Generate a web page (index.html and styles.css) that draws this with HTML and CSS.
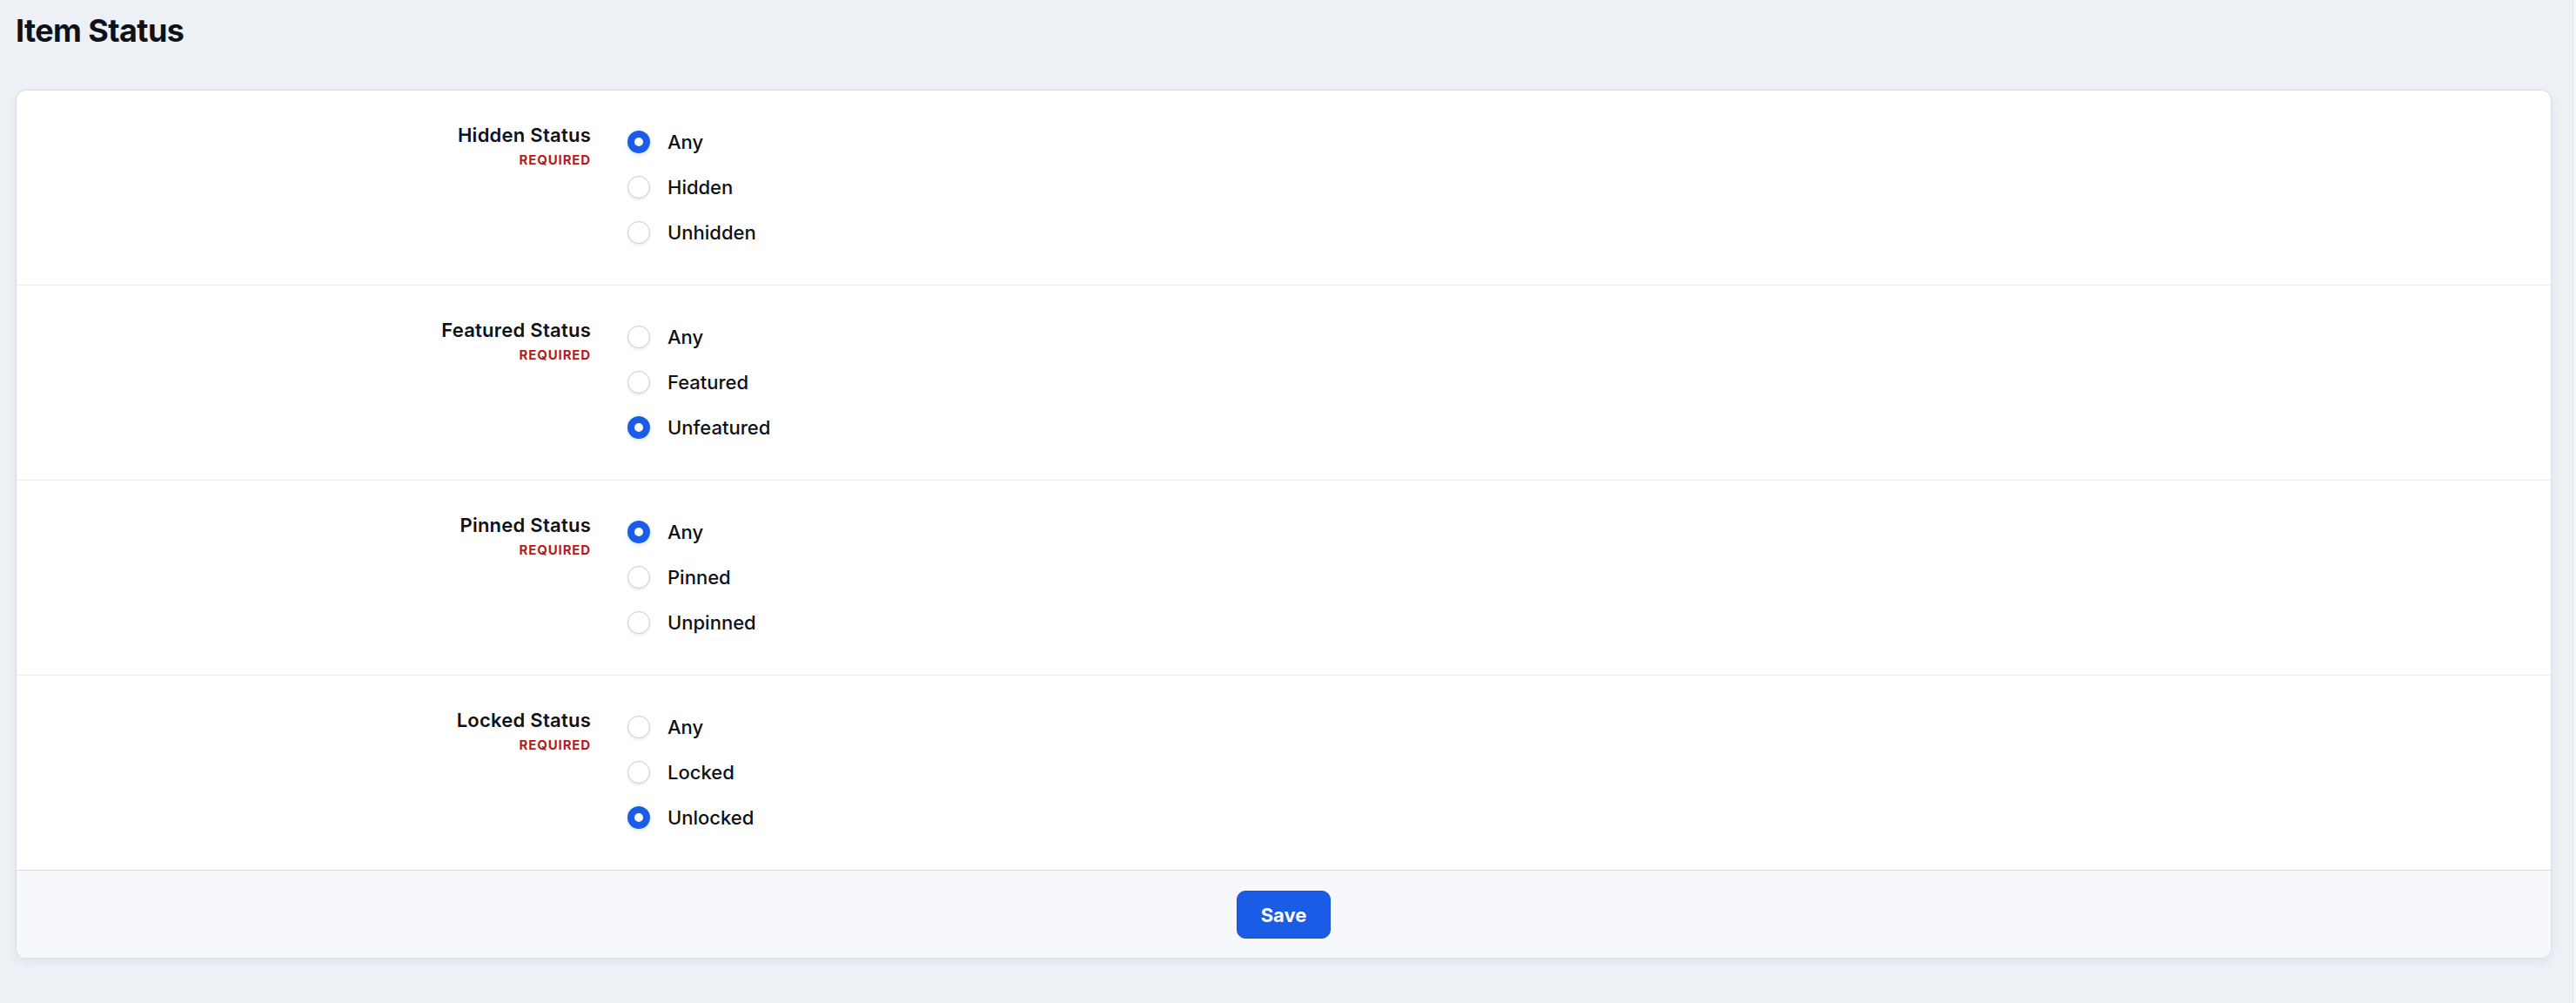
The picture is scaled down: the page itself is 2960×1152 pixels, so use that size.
FILE: index.html
```html
<!DOCTYPE html>
<html lang="en">
<head>
    <meta charset="UTF-8">
    <meta name="viewport" content="width=device-width, initial-scale=1.0">
    <title>Item Status</title>
    <link rel="stylesheet" href="styles.css">
</head>
<body>

<div class="shell">
  <main class="page">
    <h1 class="page-title">Item Status</h1>

    <form class="card">
      <div class="field">
        <div class="field-label">
          <span class="label-text">Hidden Status</span>
          <span class="required">Required</span>
        </div>
        <div class="options">
          <label class="option"><input type="radio" name="hidden" checked><span>Any</span></label>
          <label class="option"><input type="radio" name="hidden"><span>Hidden</span></label>
          <label class="option"><input type="radio" name="hidden"><span>Unhidden</span></label>
        </div>
      </div>

      <div class="field">
        <div class="field-label">
          <span class="label-text">Featured Status</span>
          <span class="required">Required</span>
        </div>
        <div class="options">
          <label class="option"><input type="radio" name="featured"><span>Any</span></label>
          <label class="option"><input type="radio" name="featured"><span>Featured</span></label>
          <label class="option"><input type="radio" name="featured" checked><span>Unfeatured</span></label>
        </div>
      </div>

      <div class="field">
        <div class="field-label">
          <span class="label-text">Pinned Status</span>
          <span class="required">Required</span>
        </div>
        <div class="options">
          <label class="option"><input type="radio" name="pinned" checked><span>Any</span></label>
          <label class="option"><input type="radio" name="pinned"><span>Pinned</span></label>
          <label class="option"><input type="radio" name="pinned"><span>Unpinned</span></label>
        </div>
      </div>

      <div class="field">
        <div class="field-label">
          <span class="label-text">Locked Status</span>
          <span class="required">Required</span>
        </div>
        <div class="options">
          <label class="option"><input type="radio" name="locked"><span>Any</span></label>
          <label class="option"><input type="radio" name="locked"><span>Locked</span></label>
          <label class="option"><input type="radio" name="locked" checked><span>Unlocked</span></label>
        </div>
      </div>

      <div class="card-footer">
        <button type="button" class="btn-save">Save</button>
      </div>
    </form>
  </main>
  <div class="scroll-track"></div>
</div>

</body>
</html>
```

FILE: styles.css
```css
html, body {
    margin: 0;
    padding: 0;
    height: 100%;
}
body {
    background-color: #edf0f5;
    font-family: Inter, "Noto Sans", Arial, sans-serif;
    color: #0d1118;
    overflow: hidden;
}
.shell {
    display: flex;
    min-height: 100%;
}
.page {
    flex: 1;
    padding: 11px 24px 0 18px;
}
.scroll-track {
    width: 3px;
    background-color: #f7f7f8;
    border-left: 1px solid #e3e4e6;
}
.page-title {
    margin: 0 0 44px 0;
    font-size: 36px;
    line-height: 48px;
    font-weight: 700;
    letter-spacing: -0.6px;
}
.card {
    background-color: #fff;
    border: 1px solid #d8dde6;
    border-radius: 12px;
    box-shadow: 0 4px 12px rgba(20, 30, 50, 0.06);
    overflow: hidden;
}
.field {
    display: grid;
    grid-template-columns: 660px 1fr;
    column-gap: 42px;
    height: 223px;
    border-bottom: 1px solid #ececee;
}
.field:nth-last-child(2) {
    border-bottom: none;
}
.field-label {
    display: flex;
    flex-direction: column;
    align-items: flex-end;
    padding-top: 35px;
}
.label-text {
    font-size: 22px;
    line-height: 32px;
    font-weight: 600;
    letter-spacing: 0.25px;
}
.required {
    margin-top: 3px;
    font-size: 15px;
    line-height: 20px;
    font-weight: 700;
    text-transform: uppercase;
    letter-spacing: 0.85px;
    color: #b1201b;
}
.options {
    display: flex;
    flex-direction: column;
    padding-top: 33px;
}
.option {
    display: flex;
    align-items: center;
    gap: 20px;
    height: 52px;
    font-size: 22px;
    font-weight: 500;
}
.option input {
    appearance: none;
    -webkit-appearance: none;
    margin: 0;
    width: 26px;
    height: 26px;
    border-radius: 50%;
    border: 1.5px solid #c6cbd4;
    background-color: #fff;
    box-shadow: 0 2px 3px rgba(20, 30, 50, 0.08);
    box-sizing: border-box;
}
.option input:checked {
    border: 8.5px solid #1a5ce5;
    box-shadow: 0 2px 4px rgba(26, 92, 229, 0.18);
}
.card-footer {
    display: flex;
    justify-content: center;
    padding: 23px 0 22px;
    background-color: #f6f8fb;
    border-top: 1px solid #d8dde6;
}
.btn-save {
    width: 108px;
    height: 55px;
    border: 1px solid #1752d1;
    border-radius: 10px;
    background-color: #1a5ce5;
    color: #fff;
    font-family: Inter, "Noto Sans", Arial, sans-serif;
    font-size: 22px;
    font-weight: 700;
}
```
